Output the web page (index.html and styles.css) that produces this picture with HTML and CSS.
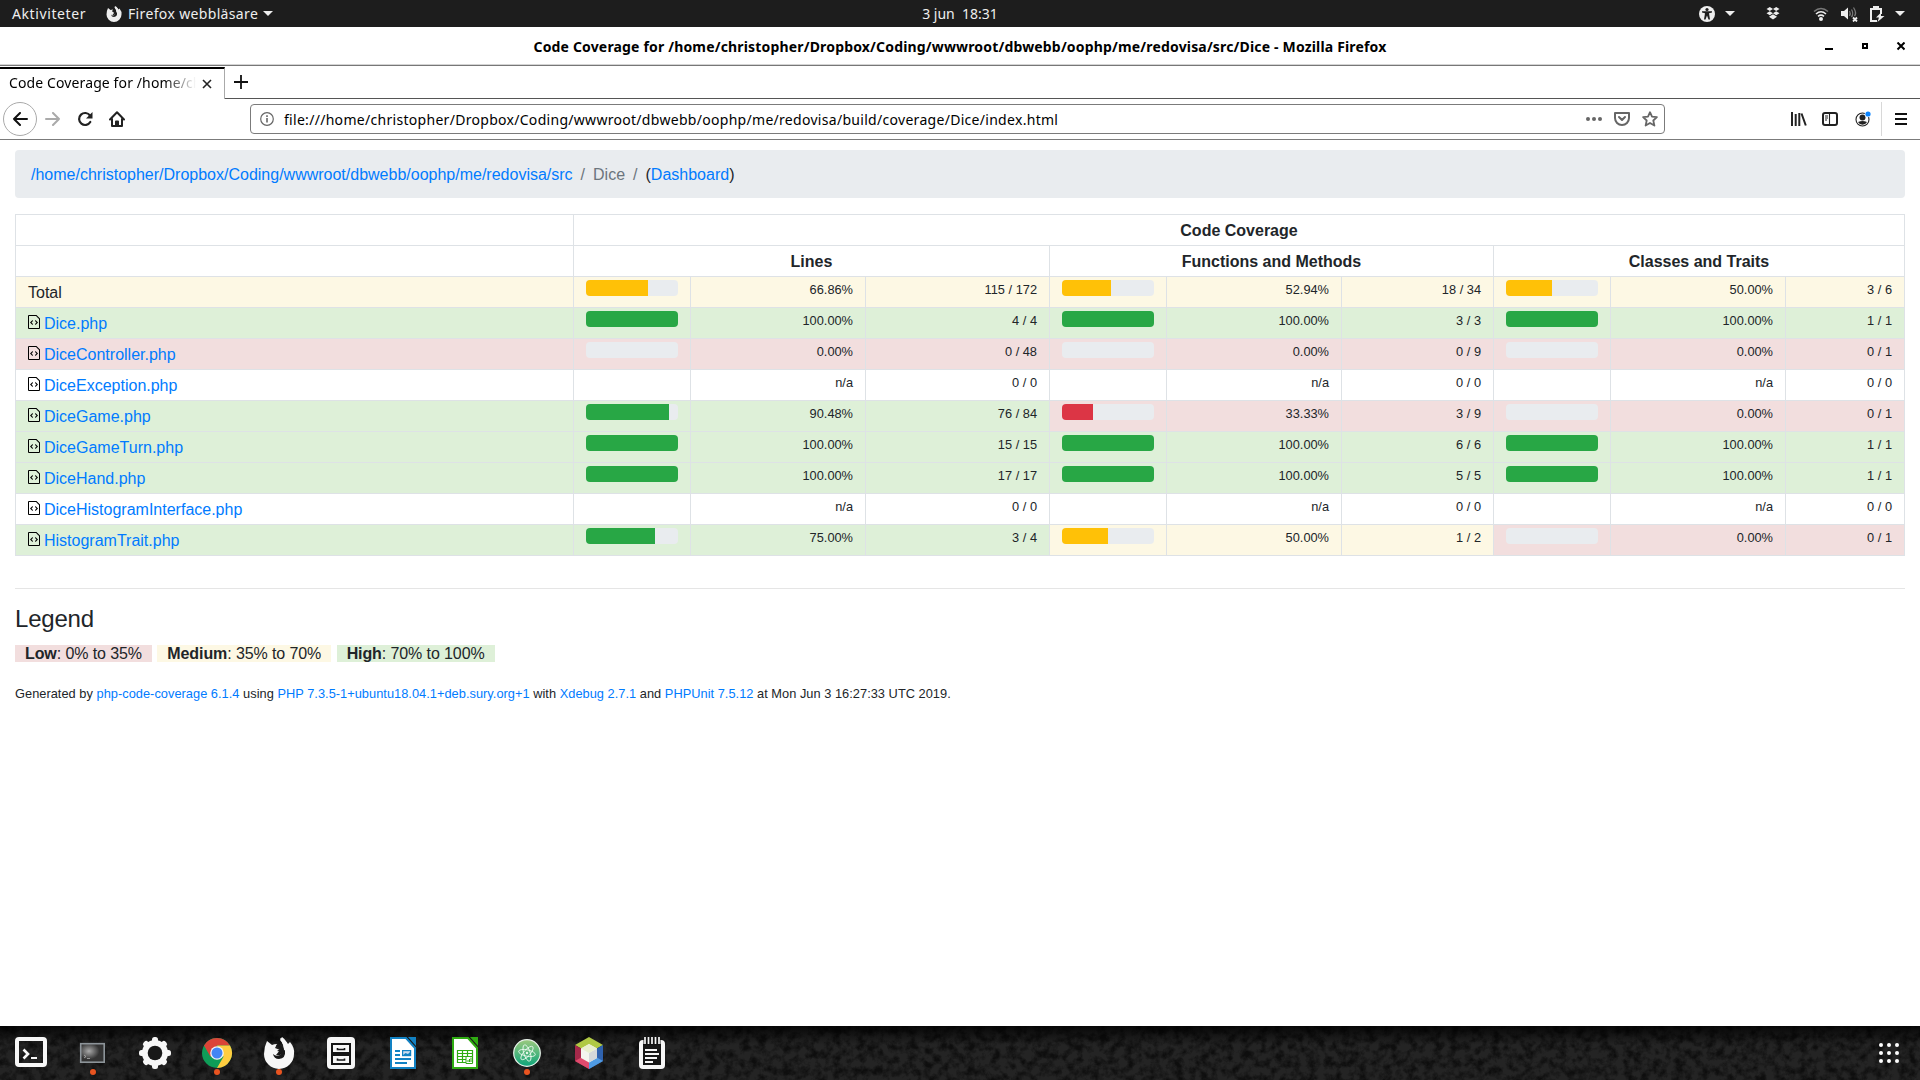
FILE: index.html
```html
<!DOCTYPE html>
<html lang="sv">
<head>
<meta charset="utf-8">
<title>Code Coverage for /home/christopher/Dropbox/Coding/wwwroot/dbwebb/oophp/me/redovisa/src/Dice</title>
<link rel="stylesheet" href="styles.css">
</head>
<body>
<svg class="defs" width="0" height="0">
  <symbol id="fox" viewBox="0 0 32 32"><path d="M4 4 9 8Q11 7 14 7L12 11 17 13 13 18Q19 19 21 14Q21 8 17 1Q23 3 25 7L27 5Q32 11 31 17A15 15 0 1 1 1 17Q1 10 4 4ZM10 15Q9 21 15 22Q11 23 9 19Z" fill="currentColor"/><path d="M13 8Q20 7 22 14Q23 21 16 22Q11 22 10 17Q13 20 17 18L19 15 14 14 17 12Z" fill="var(--hole)"/><path d="M19 0Q25 4 25 12L21 13Q21 7 17 3Z" fill="currentColor"/></symbol>
  <symbol id="file" viewBox="0 0 12 16"><path d="M8.500 1H1a1 1 0 0 0-1 1v12a1 1 0 0 0 1 1h10a1 1 0 0 0 1-1V4.500zM11 14H1V2h7l3 3zM5 6.980 3.500 8.500 5 10l-.5 1L2 8.500 4.500 6zM7.500 6 10 8.500 7.500 11 7 10.020 8.500 8.500 7 7z"/></symbol>
</svg>

<header class="topbar">
  <div class="tb-left">
    <span class="act">Aktiviteter</span>
    <svg class="tb-fox" width="16" height="16"><use href="#fox"/></svg>
    <span class="app">Firefox webbläsare</span>
    <i class="caret"></i>
  </div>
  <span class="clock">3 jun&nbsp; 18:31</span>
  <div class="tb-right">
    <svg width="16" height="16" viewBox="0 0 16 16"><circle cx="8" cy="8" r="8" fill="#eee"/><circle cx="8" cy="3.500" r="1.600" fill="#1d1d1d"/><path d="M3 5.200 13 5.200V6.500L10 7.200 11 13.500H9.500L8 9.500 6.500 13.500H5L6 7.200 3 6.500z" fill="#1d1d1d"/></svg>
    <i class="caret c1"></i>
    <svg class="dbx" width="14" height="13" viewBox="0 0 14 13" fill="#eee"><path d="M3.800 0 7 2 3.800 4 .5 2zM10.200 0 13.500 2 10.200 4 7 2zM3.800 4.200 7 6.200 3.800 8.200.5 6.200zM10.200 4.200 13.500 6.200 10.200 8.200 7 6.200zM7 7.200 11 9.800 7 12.500 3 9.800z"/></svg>
    <svg class="wifi" width="16" height="16" viewBox="0 0 16 16" fill="none" stroke-width="1.600"><path d="M1 5.500Q8-.5 15 5.500" stroke="#777"/><path d="M3 8Q8 3.500 13 8M5 10.300Q8 7.800 11 10.300" stroke="#eee"/><circle cx="8" cy="13" r="2" fill="#eee"/></svg>
    <svg class="vol" width="17" height="16" viewBox="0 0 17 16"><path d="M0 5H3L7 1.500V13.500L3 10H0z" fill="#eee"/><path d="M8.500 5Q10 7.500 8.500 10M10.500 3.500Q13 7.500 10.500 11M12.500 1.500Q16 7 13.500 10" stroke="#777" fill="none" stroke-width="1.300"/><path d="M12 11.500 16 15.500M16 11.500 12 15.500" stroke="#eee" stroke-width="1.800"/></svg>
    <svg class="bat" width="15" height="16" viewBox="0 0 15 16"><path d="M7 15H1V3H11V8" stroke="#eee" stroke-width="2" fill="none"/><path d="M3 0H9V3H3z" fill="#eee"/><path d="M11 6.500 6 11.500H9L7.500 16 14.500 10H11z" fill="#eee"/></svg>
    <i class="caret c2"></i>
  </div>
</header>

<div class="titlebar">
  <span class="title">Code Coverage for /home/christopher/Dropbox/Coding/wwwroot/dbwebb/oophp/me/redovisa/src/Dice - Mozilla Firefox</span>
  <svg class="winctl" width="80" height="10" viewBox="0 0 80 10"><path d="M0 6H8V8H0z"/><path d="M38 2h4v4h-4z" fill="none" stroke="#000" stroke-width="2"/><path d="M72.500.5 79.500 7.500M79.500.5 72.500 7.500" stroke="#000" stroke-width="2"/></svg>
</div>

<div class="tabs">
  <div class="tab"><span class="tab-text">Code Coverage for /home/ch</span><svg width="10" height="10" viewBox="0 0 10 10"><path d="M1 1 9 9M9 1 1 9" stroke="#222" stroke-width="1.600"/></svg></div>
  <div class="strip"><svg width="14" height="14" viewBox="0 0 14 14"><path d="M7 0V14M0 7H14" stroke="#111" stroke-width="1.800"/></svg></div>
</div>

<nav class="nav">
  <span class="back"><svg width="16" height="14" viewBox="0 0 16 14"><path d="M15 7H2M8 1 2 7 8 13" fill="none" stroke="#111" stroke-width="2" stroke-linecap="round" stroke-linejoin="round"/></svg></span>
  <svg class="fwd" width="16" height="14" viewBox="0 0 16 14"><path d="M1 7H14M8 1 14 7 8 13" fill="none" stroke="#aaa" stroke-width="2" stroke-linecap="round" stroke-linejoin="round"/></svg>
  <svg class="reload" width="16" height="16" viewBox="0 0 16 16"><path d="M13 4.500A6 6 0 1 0 13.300 11" fill="none" stroke="#222" stroke-width="2.200" stroke-linecap="round"/><path d="M15.500 1V7.500H9z" fill="#222"/></svg>
  <svg class="home" width="16" height="16" viewBox="0 0 16 16" fill="none" stroke="#222" stroke-width="2" stroke-linejoin="round" stroke-linecap="round"><path d="M1 8.500 8 1.300 15 8.500M3 8V15H13V8"/><path d="M7 14V10.500H9V14" /></svg>
  <div class="url">
    <svg width="14" height="14" viewBox="0 0 14 14"><circle cx="7" cy="7" r="6.300" fill="none" stroke="#666" stroke-width="1.200"/><path d="M6.200 6H7.800V10.500H6.200zM6.200 3.300H7.800V4.900H6.200z" fill="#666"/></svg>
    <span class="addr">file:///home/christopher/Dropbox/Coding/wwwroot/dbwebb/oophp/me/redovisa/build/coverage/Dice/index.html</span>
    <svg width="16" height="4" viewBox="0 0 16 4" fill="#666"><circle cx="2" cy="2" r="2"/><circle cx="8" cy="2" r="2"/><circle cx="14" cy="2" r="2"/></svg>
    <svg class="pocket" width="16" height="14" viewBox="0 0 16 14" fill="none" stroke="#666" stroke-width="2" stroke-linecap="round" stroke-linejoin="round"><path d="M1 1H15V6A7 7 0 0 1 1 6z"/><path d="M5 5 8 8 11 5"/></svg>
    <svg class="star" width="16" height="16" viewBox="0 0 16 16"><path d="M8 1.200 10 5.600 14.900 6.100 11.300 9.500 12.400 14.600 8 12 3.600 14.600 4.700 9.500 1.100 6.100 6 5.600z" fill="none" stroke="#666" stroke-width="1.800" stroke-linejoin="round"/></svg>
  </div>
  <svg class="lib" width="16" height="14" viewBox="0 0 16 14" stroke="#222" stroke-width="2"><path d="M1 0V14M4.700 2V14M8.300 1V14M10.500 1.500 14.800 13.500"/></svg>
  <svg class="side" width="16" height="14" viewBox="0 0 16 14"><rect x="1" y="1" width="14" height="12" rx="2" fill="none" stroke="#222" stroke-width="2"/><path d="M7.500 1V13M3 4H6M3 6H6M3 8H5" stroke="#222" stroke-width="1.100"/></svg>
  <svg class="acct" width="17" height="16" viewBox="0 0 17 16"><circle cx="7.500" cy="8.500" r="6.500" fill="none" stroke="#222" stroke-width="1.100"/><circle cx="7.500" cy="6.500" r="3" fill="#222"/><path d="M3 11Q7.500 9 12 11Q10.500 13.800 7.500 13.800T3 11z" fill="#222"/><circle cx="13" cy="3" r="3.300" fill="#fff"/><circle cx="13" cy="3" r="2.600" fill="#0a84ff"/></svg>
  <i class="sep"></i>
  <svg class="menu" width="12" height="12" viewBox="0 0 12 12"><path d="M0 1H12M0 6H12M0 11H12" stroke="#111" stroke-width="1.800"/></svg>
</nav>

<main class="page">
  <div class="crumbs"><a>/home/christopher/Dropbox/Coding/wwwroot/dbwebb/oophp/me/redovisa/src</a><span class="slash">/</span><span class="muted">Dice</span><span class="slash">/</span><span>(<a>Dashboard</a>)</span></div>

  <table class="cov">
    <colgroup><col class="c-name"><col class="c-bar"><col class="c-pct"><col class="c-num"><col class="c-bar"><col class="c-pct"><col class="c-num2"><col class="c-bar"><col class="c-pct"><col class="c-num3"></colgroup>
    <tr><th></th><th colspan="9">Code Coverage</th></tr>
    <tr><th></th><th colspan="3">Lines</th><th colspan="3">Functions and Methods</th><th colspan="3">Classes and Traits</th></tr>
    <tr><td class="m">Total</td>
      <td class="m"><div class="bar"><b style="width:66.86%"></b></div></td><td class="m n">66.86%</td><td class="m n">115 / 172</td>
      <td class="m"><div class="bar"><b style="width:52.94%"></b></div></td><td class="m n">52.94%</td><td class="m n">18 / 34</td>
      <td class="m"><div class="bar"><b style="width:50%"></b></div></td><td class="m n">50.00%</td><td class="m n">3 / 6</td></tr>
    <tr><td class="h"><svg class="ico"><use href="#file"/></svg><a>Dice.php</a></td>
      <td class="h"><div class="bar"><b style="width:100%"></b></div></td><td class="h n">100.00%</td><td class="h n">4 / 4</td>
      <td class="h"><div class="bar"><b style="width:100%"></b></div></td><td class="h n">100.00%</td><td class="h n">3 / 3</td>
      <td class="h"><div class="bar"><b style="width:100%"></b></div></td><td class="h n">100.00%</td><td class="h n">1 / 1</td></tr>
    <tr><td class="l"><svg class="ico"><use href="#file"/></svg><a>DiceController.php</a></td>
      <td class="l"><div class="bar"></div></td><td class="l n">0.00%</td><td class="l n">0 / 48</td>
      <td class="l"><div class="bar"></div></td><td class="l n">0.00%</td><td class="l n">0 / 9</td>
      <td class="l"><div class="bar"></div></td><td class="l n">0.00%</td><td class="l n">0 / 1</td></tr>
    <tr><td><svg class="ico"><use href="#file"/></svg><a>DiceException.php</a></td>
      <td></td><td class="n">n/a</td><td class="n">0 / 0</td>
      <td></td><td class="n">n/a</td><td class="n">0 / 0</td>
      <td></td><td class="n">n/a</td><td class="n">0 / 0</td></tr>
    <tr><td class="h"><svg class="ico"><use href="#file"/></svg><a>DiceGame.php</a></td>
      <td class="h"><div class="bar"><b style="width:90.48%"></b></div></td><td class="h n">90.48%</td><td class="h n">76 / 84</td>
      <td class="l"><div class="bar"><b style="width:33.33%"></b></div></td><td class="l n">33.33%</td><td class="l n">3 / 9</td>
      <td class="l"><div class="bar"></div></td><td class="l n">0.00%</td><td class="l n">0 / 1</td></tr>
    <tr><td class="h"><svg class="ico"><use href="#file"/></svg><a>DiceGameTurn.php</a></td>
      <td class="h"><div class="bar"><b style="width:100%"></b></div></td><td class="h n">100.00%</td><td class="h n">15 / 15</td>
      <td class="h"><div class="bar"><b style="width:100%"></b></div></td><td class="h n">100.00%</td><td class="h n">6 / 6</td>
      <td class="h"><div class="bar"><b style="width:100%"></b></div></td><td class="h n">100.00%</td><td class="h n">1 / 1</td></tr>
    <tr><td class="h"><svg class="ico"><use href="#file"/></svg><a>DiceHand.php</a></td>
      <td class="h"><div class="bar"><b style="width:100%"></b></div></td><td class="h n">100.00%</td><td class="h n">17 / 17</td>
      <td class="h"><div class="bar"><b style="width:100%"></b></div></td><td class="h n">100.00%</td><td class="h n">5 / 5</td>
      <td class="h"><div class="bar"><b style="width:100%"></b></div></td><td class="h n">100.00%</td><td class="h n">1 / 1</td></tr>
    <tr><td><svg class="ico"><use href="#file"/></svg><a>DiceHistogramInterface.php</a></td>
      <td></td><td class="n">n/a</td><td class="n">0 / 0</td>
      <td></td><td class="n">n/a</td><td class="n">0 / 0</td>
      <td></td><td class="n">n/a</td><td class="n">0 / 0</td></tr>
    <tr><td class="h"><svg class="ico"><use href="#file"/></svg><a>HistogramTrait.php</a></td>
      <td class="h"><div class="bar"><b style="width:75%"></b></div></td><td class="h n">75.00%</td><td class="h n">3 / 4</td>
      <td class="m"><div class="bar"><b style="width:50%"></b></div></td><td class="m n">50.00%</td><td class="m n">1 / 2</td>
      <td class="l"><div class="bar"></div></td><td class="l n">0.00%</td><td class="l n">0 / 1</td></tr>
  </table>

  <footer class="foot">
    <h4>Legend</h4>
    <p class="legend"><span class="l"><strong>Low</strong>: 0% to 35%</span> <span class="m"><strong>Medium</strong>: 35% to 70%</span> <span class="h"><strong>High</strong>: 70% to 100%</span></p>
    <p class="gen">Generated by <a>php-code-coverage 6.1.4</a> using <a>PHP 7.3.5-1+ubuntu18.04.1+deb.sury.org+1</a> with <a>Xdebug 2.7.1</a> and <a>PHPUnit 7.5.12</a> at Mon Jun 3 16:27:33 UTC 2019.</p>
  </footer>
</main>

<div class="dock">
  <svg class="grain" width="1920" height="54"><filter id="g" x="0" y="0" width="100%" height="100%"><feTurbulence type="fractalNoise" baseFrequency=".12" numOctaves="4" seed="8"/><feColorMatrix values="0 0 0 0 0  0 0 0 0 0  0 0 0 0 0  2.600 0 0 0 -1"/></filter><rect width="1920" height="54" filter="url(#g)" opacity=".6"/></svg>
  <span class="slot"><svg width="32" height="32" viewBox="0 0 32 32"><path fill-rule="evenodd" d="M4 0H28Q32 0 32 4V26Q32 30 28 30H4Q0 30 0 26V4Q0 0 4 0zM4 4V26H28V4z" fill="#f7f7f7"/><path d="M8.500 12.500 13 17 8.500 21.500" fill="none" stroke="#f7f7f7" stroke-width="2.600"/><path d="M16 21H22" stroke="#f7f7f7" stroke-width="2"/></svg></span>
  <span class="slot run"><svg width="32" height="32" viewBox="0 0 32 32"><defs><radialGradient id="scr" cx=".35" cy=".4" r=".5"><stop offset="0" stop-color="#aaa"/><stop offset=".9" stop-color="#333"/></radialGradient></defs><rect x="3.700" y="6.700" width="23.500" height="18.500" fill="url(#scr)" stroke="#8d9499" stroke-width="1.600"/><path d="M7 18 9 19.500 7 21M10 21.500H13" stroke="#bbb" fill="none" stroke-width=".7"/></svg></span>
  <span class="slot"><svg width="32" height="32" viewBox="-16 -16 32 32"><g fill="#f7f7f7"><rect x="-3" y="-16" width="6" height="32" rx="2.500"/><rect x="-16" y="-3" width="32" height="6" rx="2.500"/><rect x="-3" y="-15.500" width="6" height="31" rx="2.500" transform="rotate(45)"/><rect x="-3" y="-15.500" width="6" height="31" rx="2.500" transform="rotate(-45)"/><circle r="13"/></g><circle r="7.300" fill="#181818"/></svg></span>
  <span class="slot run"><svg width="32" height="32" viewBox="-16 -16 32 32"><circle r="15" fill="#0f9d58"/><path d="M-13-7.500A15 15 0 0 1 13-7.500H0L-6.500 3.700z" fill="#db4437"/><path d="M13-7.500A15 15 0 0 1 0 15L6.500 3.700 0-7.500z" fill="#ffcd40"/><circle r="6.800" fill="#f4f4f4"/><circle r="5.500" fill="#4285f4"/></svg></span>
  <span class="slot run"><svg width="32" height="32"><use href="#fox"/></svg></span>
  <span class="slot"><svg width="28" height="32" viewBox="0 0 28 32"><rect width="28" height="32" rx="4" fill="#f7f7f7"/><path d="M5 7H23V16H5zM5 18H23V27H5z" fill="none" stroke="#151515" stroke-width="2"/><path d="M10.500 11V12.500H17.500V11M10.500 21.500V23H17.500V21.500" fill="none" stroke="#151515" stroke-width="1.600"/></svg></span>
  <span class="slot"><svg width="26" height="32" viewBox="0 0 26 32"><path d="M1 1H16L25 11V31H1z" fill="#fff" stroke="#1282c4" stroke-width="2"/><path d="M18 0H26V9z" fill="#1282c4"/><path d="M5 14H10M5 18H10M5 22H21M5 26H17" stroke="#1282c4" stroke-width="1.800"/><rect x="12.600" y="13.600" width="8" height="5" fill="#cde" stroke="#1282c4" stroke-width="1.200"/><path d="M13 18 15.500 16 18 17 20 15V18z" fill="#1282c4"/></svg></span>
  <span class="slot"><svg width="26" height="32" viewBox="0 0 26 32"><path d="M1 1H16L25 11V31H1z" fill="#fff" stroke="#2fac12" stroke-width="2"/><path d="M18 0H26V9z" fill="#2fac12"/><path d="M5.500 13.500H20.500V25.500H5.500zM5.500 16.500H20.500M5.500 19.500H20.500M5.500 22.500H14M10.500 13.500V25.500M15.500 13.500V20" fill="none" stroke="#2fac12" stroke-width="1.200"/><path d="M14 19.500H20.500V26.500H14z" fill="#fff" stroke="#2fac12"/><path d="M16 25V23M17.500 25V22M19 25V20.500" stroke="#2fac12"/></svg></span>
  <span class="slot run"><svg width="32" height="32" viewBox="-16 -16 32 32"><defs><linearGradient id="at" x2="0" y2="1"><stop offset="0" stop-color="#9cc97e"/><stop offset="1" stop-color="#0da57a"/></linearGradient></defs><circle r="13.300" fill="url(#at)" stroke="#e8f2ea" stroke-width="1.200"/><g fill="none" stroke="#e6f7ea" stroke-width=".9"><ellipse rx="8.500" ry="3.200" transform="rotate(12)"/><ellipse rx="8.500" ry="3.200" transform="rotate(72)"/><ellipse rx="8.500" ry="3.200" transform="rotate(132)"/></g><circle r="1.200" fill="#e6f7ea"/></svg></span>
  <span class="slot"><svg width="28" height="32" viewBox="0 0 28 32"><path d="M14 0 28 8 14 16 0 8z" fill="#b0c944"/><path d="M0 8 14 16V32L0 24z" fill="#a5294a"/><path d="M0 24 7 20 14 24V32z" fill="#e04a6d"/><path d="M28 8V24L14 32V16z" fill="#2f62ae"/><path d="M28 24 21 20 14 24V32z" fill="#4f9be4"/><path d="M14 7 22 11.500V21L14 25.500 6 21V11.500z" fill="#f4f4ee"/><path d="M14 16 22 11.500V21L14 25.500z" fill="#d4d8da"/><path d="M14 7 22 11.500 14 16 6 11.500z" fill="#e9efce"/></svg></span>
  <span class="slot last"><svg width="26" height="32" viewBox="0 0 26 32"><path d="M4 3H22Q26 3 26 7V28Q26 32 22 32H4Q0 32 0 28V7Q0 3 4 3z" fill="#f7f7f7"/><path d="M4 7H22V28H4z" fill="#171717"/><path d="M4.500 0H21.500V8H4.500z" fill="#111"/><path d="M6 0V7M9.500 0V7M13 0V7M16.500 0V7M20 0V7" stroke="#f7f7f7" stroke-width="1.700"/><path d="M6 13H18M6 17H20M6 21H18M6 25H14" stroke="#f7f7f7" stroke-width="1.800"/></svg></span>
  <svg class="apps" width="20" height="20" viewBox="0 0 20 20" fill="#fff"><circle cx="2" cy="2" r="2"/><circle cx="10" cy="2" r="2"/><circle cx="18" cy="2" r="2"/><circle cx="2" cy="10" r="2"/><circle cx="10" cy="10" r="2"/><circle cx="18" cy="10" r="2"/><circle cx="2" cy="18" r="2"/><circle cx="10" cy="18" r="2"/><circle cx="18" cy="18" r="2"/></svg>
</div>
</body>
</html>
```
FILE: styles.css
```css
* { box-sizing: border-box; }
body { margin: 0; width: 1920px; height: 1080px; overflow: hidden; display: flex; flex-direction: column; background: #fff; color: #212529; font: 16px/24px "Liberation Sans", Arial, sans-serif; }
svg { display: block; flex: none; }
.defs { position: absolute; }
a { color: #007bff; }

.topbar, .titlebar, .tabs, .nav { font-family: "Noto Sans", "Open Sans", sans-serif; font-size: 14px; white-space: nowrap; flex: none; }
.topbar { height: 27px; background: #1d1d1d; color: #eee; display: grid; grid-template-columns: 1fr auto 1fr; align-items: center; line-height: 27px; --hole: #1d1d1d; }
.tb-left, .tb-right { display: flex; align-items: center; }
.tb-left { padding-left: 12px; }
.act { width: 74px; letter-spacing: .6px; }
.tb-fox { margin: 0 6px 0 20px; }
.app { width: 130px; letter-spacing: .35px; }
.caret { border: 5px solid transparent; border-top-color: #eee; border-bottom: 0; margin-left: 5px; }
.tb-right { justify-content: flex-end; padding-right: 15px; }
.c1 { margin-left: 10px; }
.dbx { margin-left: 31px; }
.wifi { margin-left: 33px; }
.vol { margin-left: 12px; }
.bat { margin-left: 12px; }
.c2 { margin-left: 10px; }

.titlebar { height: 39px; border-bottom: 1px solid #777; box-shadow: inset 0 -1px #d4d4d4; display: grid; grid-template-columns: 1fr auto 1fr; align-items: center; line-height: 38px; color: #000; }
.title { grid-column: 2; font-weight: 700; letter-spacing: .168px; padding-top: 1px; line-height: 37px; }
.winctl { justify-self: end; margin: 1px 15px 0 0; }

.tabs { height: 33px; display: flex; color: #000; }
.tab { width: 225px; border-top: 2px solid #000; border-right: 1px solid #aaa; margin-top: 1px; display: flex; align-items: center; gap: 6px; padding-left: 9px; }
.tab-text { width: 187px; line-height: 28px; padding-bottom: 2px; letter-spacing: .115px; -webkit-mask-image: linear-gradient(90deg, #000 155px, transparent 187px); mask-image: linear-gradient(90deg, #000 155px, transparent 187px); }
.strip { flex: 1; border-bottom: 1px solid #555; padding: 9px 9px; }

.nav { height: 41px; border-bottom: 1px solid #7b7b7b; display: flex; align-items: center; padding-left: 3px; color: #000; }
.back { width: 34px; height: 34px; border: 1px solid #aaa; border-radius: 50%; display: flex; align-items: center; justify-content: center; }
.fwd { margin-left: 8px; }
.reload { margin-left: 16px; }
.home { margin-left: 16px; }
.url { margin-left: 125px; width: 1415px; height: 30px; border: 1px solid #7b7b7b; border-radius: 4px; display: flex; align-items: center; padding: 0 6px 0 9px; }
.addr { flex: 1; margin-left: 10px; letter-spacing: .295px; line-height: 27px; padding-top: 1px; }
.pocket { margin-left: 12px; }
.star { margin-left: 12px; }
.lib { margin-left: 126px; }
.side { margin-left: 15px; }
.acct { margin-left: 17px; }
.sep { width: 1px; height: 34px; background: #d8d8d8; margin-left: 9px; }
.menu { margin-left: 13px; }

.page { flex: 1; padding: 10px 15px 0; }
.crumbs { height: 48px; background: #e9ecef; border-radius: 4px; padding: 13px 16px 11px; margin-bottom: 16px; }
.slash, .muted { color: #6c757d; }
.slash { padding: 0 8px; }

.cov { width: 1890px; table-layout: fixed; border-collapse: collapse; }
.cov tr { height: 31px; }
.cov th, .cov td { border: 1px solid #dee2e6; padding: 4px 12px 2px; vertical-align: top; }
.cov td { white-space: nowrap; }
.c-name { width: 558px; }
.c-bar { width: 117px; }
.c-pct { width: 175px; }
.c-num { width: 184px; }
.c-num2 { width: 152px; }
.cov .n { text-align: right; font-size: 12.8px; line-height: 19px; padding-top: 3px; }
.m { background: #fdf8e4; --bar: #ffc107; }
.h { background: #def0d8; --bar: #28a745; }
.l { background: #f2dede; --bar: #dc3545; }
.bar { height: 16px; background: #e9ecef; border-radius: 4px; overflow: hidden; margin-top: -1px; }
.bar b { display: block; height: 16px; background: var(--bar); }
.ico { display: inline-block; width: 12px; height: 16px; vertical-align: text-top; margin: -1px 4px 0 0; }

.foot { border-top: 1px solid #e5e5e5; margin-top: 32px; padding-top: 15px; }
.foot h4 { font-size: 24px; line-height: 29px; font-weight: 500; margin: 0 0 9px; letter-spacing: -.2px; }
.foot p { margin: 0 0 18px; }
.legend span { padding: 0 10px; margin-right: 1px; letter-spacing: -.1px; }
.foot .gen { font-size: 12.8px; line-height: 20px; letter-spacing: .03px; }

.dock { position: relative; flex: none; height: 54px; background: linear-gradient(#080808, #242424 35%, #242424); display: flex; align-items: center; color: #f7f7f7; --hole: #181818; }
.grain { position: absolute; left: 0; top: 0; }
.slot { position: relative; width: 62px; height: 32px; display: flex; justify-content: center; }
.last { padding-left: 2px; }
.run::after { content: ""; position: absolute; left: 28px; top: 32px; width: 6px; height: 6px; border-radius: 50%; background: #e95420; }
.apps { position: relative; margin: 0 21px 0 auto; }
```
